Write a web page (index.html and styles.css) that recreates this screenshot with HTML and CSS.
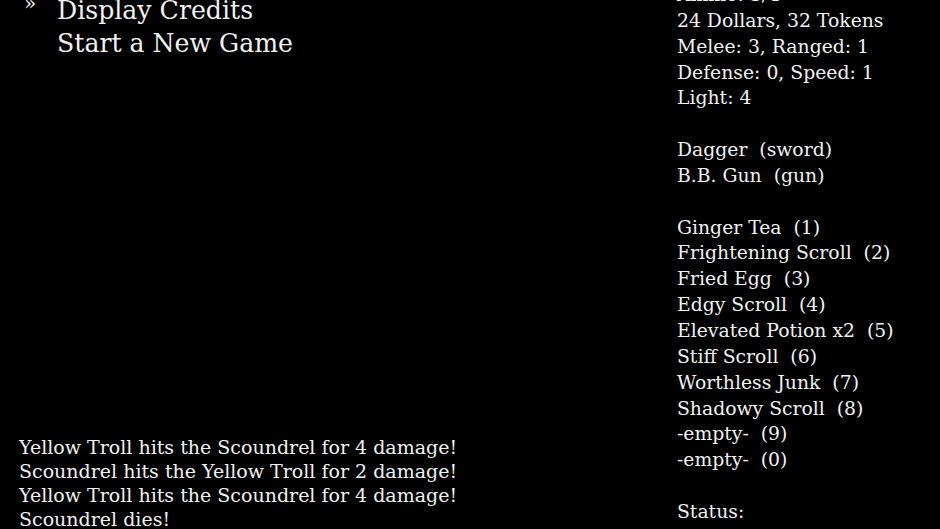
FILE: index.html
```html
<!DOCTYPE html>
<html>
<head>
<meta charset="utf-8">
<link rel="stylesheet" href="styles.css">
</head>
<body>
<div class="screen">
  <div class="main">
    <ul class="menu">
      <li class="menu-item selected"><span class="marker">»</span><span class="label">Display Credits</span></li>
      <li class="menu-item"><span class="marker"></span><span class="label">Start a New Game</span></li>
    </ul>
    <div class="log">
      <div class="log-line">Yellow Troll hits the Scoundrel for 4 damage!</div>
      <div class="log-line">Scoundrel hits the Yellow Troll for 2 damage!</div>
      <div class="log-line">Yellow Troll hits the Scoundrel for 4 damage!</div>
      <div class="log-line">Scoundrel dies!</div>
    </div>
  </div>
  <div class="side">
    <div class="line">Ammo: 3/4</div>
    <div class="line">24 Dollars, 32 Tokens</div>
    <div class="line">Melee: 3, Ranged: 1</div>
    <div class="line">Defense: 0, Speed: 1</div>
    <div class="line">Light: 4</div>
    <div class="line blank"></div>
    <div class="line">Dagger&nbsp; (sword)</div>
    <div class="line">B.B. Gun&nbsp; (gun)</div>
    <div class="line blank"></div>
    <div class="line">Ginger Tea&nbsp; (1)</div>
    <div class="line">Frightening Scroll&nbsp; (2)</div>
    <div class="line">Fried Egg&nbsp; (3)</div>
    <div class="line">Edgy Scroll&nbsp; (4)</div>
    <div class="line">Elevated Potion x2&nbsp; (5)</div>
    <div class="line">Stiff Scroll&nbsp; (6)</div>
    <div class="line">Worthless Junk&nbsp; (7)</div>
    <div class="line">Shadowy Scroll&nbsp; (8)</div>
    <div class="line">-empty-&nbsp; (9)</div>
    <div class="line">-empty-&nbsp; (0)</div>
    <div class="line blank"></div>
    <div class="line">Status:</div>
  </div>
</div>
</body>
</html>
```

FILE: styles.css
```css
html, body {
  margin: 0;
  padding: 0;
  background: #000;
  overflow: hidden;
}
body {
  color: #f2f2f2;
  font-family: "DejaVu Serif", "Liberation Serif", serif;
}
.screen {
  display: flex;
  height: 529px;
  width: 940px;
}
.main {
  width: 677px;
  display: flex;
  flex-direction: column;
  justify-content: space-between;
}
.menu {
  list-style: none;
  margin: -6px 0 0 0;
  padding: 0 0 0 24px;
  font-size: 25.2px;
  line-height: 33px;
}
.menu-item {
  display: flex;
  align-items: flex-start;
}
.marker {
  width: 33px;
  flex: none;
  font-size: 20px;
  line-height: 20px;
  margin-top: -1px;
}
.log {
  padding-left: 19px;
  font-size: 19px;
  line-height: 24px;
  margin-bottom: -2px;
}
.side {
  flex: 1;
  margin-top: -18px;
  font-size: 18.8px;
  line-height: 25.85px;
}
.line {
  height: 25.85px;
  white-space: nowrap;
}
```
